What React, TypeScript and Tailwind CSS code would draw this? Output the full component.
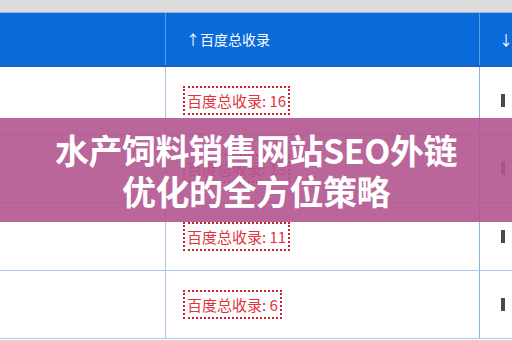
const rows = [
    { count: "16" },
    { count: "13" },
    { count: "11" },
    { count: "6" },
];

const cjk = "font-['Noto_Sans_CJK_SC','Noto_Sans',sans-serif]";

const App = () => {
    return (
        <div className={`relative w-[512px] h-[340px] overflow-hidden bg-white ${cjk}`}>
            <div className="h-[13px] bg-[#dcdcdc] border-b border-[#8db5e6]" />
            <div className="grid grid-cols-[166px_314px_1fr] h-[54px] bg-[#0a6ad9] border-b-2 border-[#1c5fc0] text-white text-[14px]">
                <div className="border-r border-[#5d9ce8]" />
                <div className="flex items-center pl-[20px] border-r border-[#5d9ce8]">↑百度总收录</div>
                <div className="flex items-center pl-[19px] whitespace-nowrap overflow-hidden">↓权重</div>
            </div>
            {rows.map((row, i) => (
                <div key={i} className="grid grid-cols-[166px_314px_1fr] h-[68px] border-b border-[#a9c8ec]">
                    <div className="border-r border-[#a9c8ec]" />
                    <div className="flex items-center pl-[17px] border-r border-[#8ab0e8]">
                        <span className="border-2 border-dotted border-[#d0202f] h-[29px] px-[2px] flex items-center text-[15px] text-[#e0343c] leading-none">
                            百度总收录: {row.count}
                        </span>
                    </div>
                    <div className="flex items-center pl-[21px]">
                        <span className="w-[4px] h-[13px] bg-[#4a4a4a]" />
                    </div>
                </div>
            ))}
            <div className="absolute left-0 right-0 top-[118px] h-[104px] bg-[#b3558f]/90 flex flex-col items-center justify-center text-white font-bold text-[34px] leading-[41px] tracking-[-0.5px]">
                <div>水产饲料销售网站SEO外链</div>
                <div>优化的全方位策略</div>
            </div>
        </div>
    );
};

export default App;
